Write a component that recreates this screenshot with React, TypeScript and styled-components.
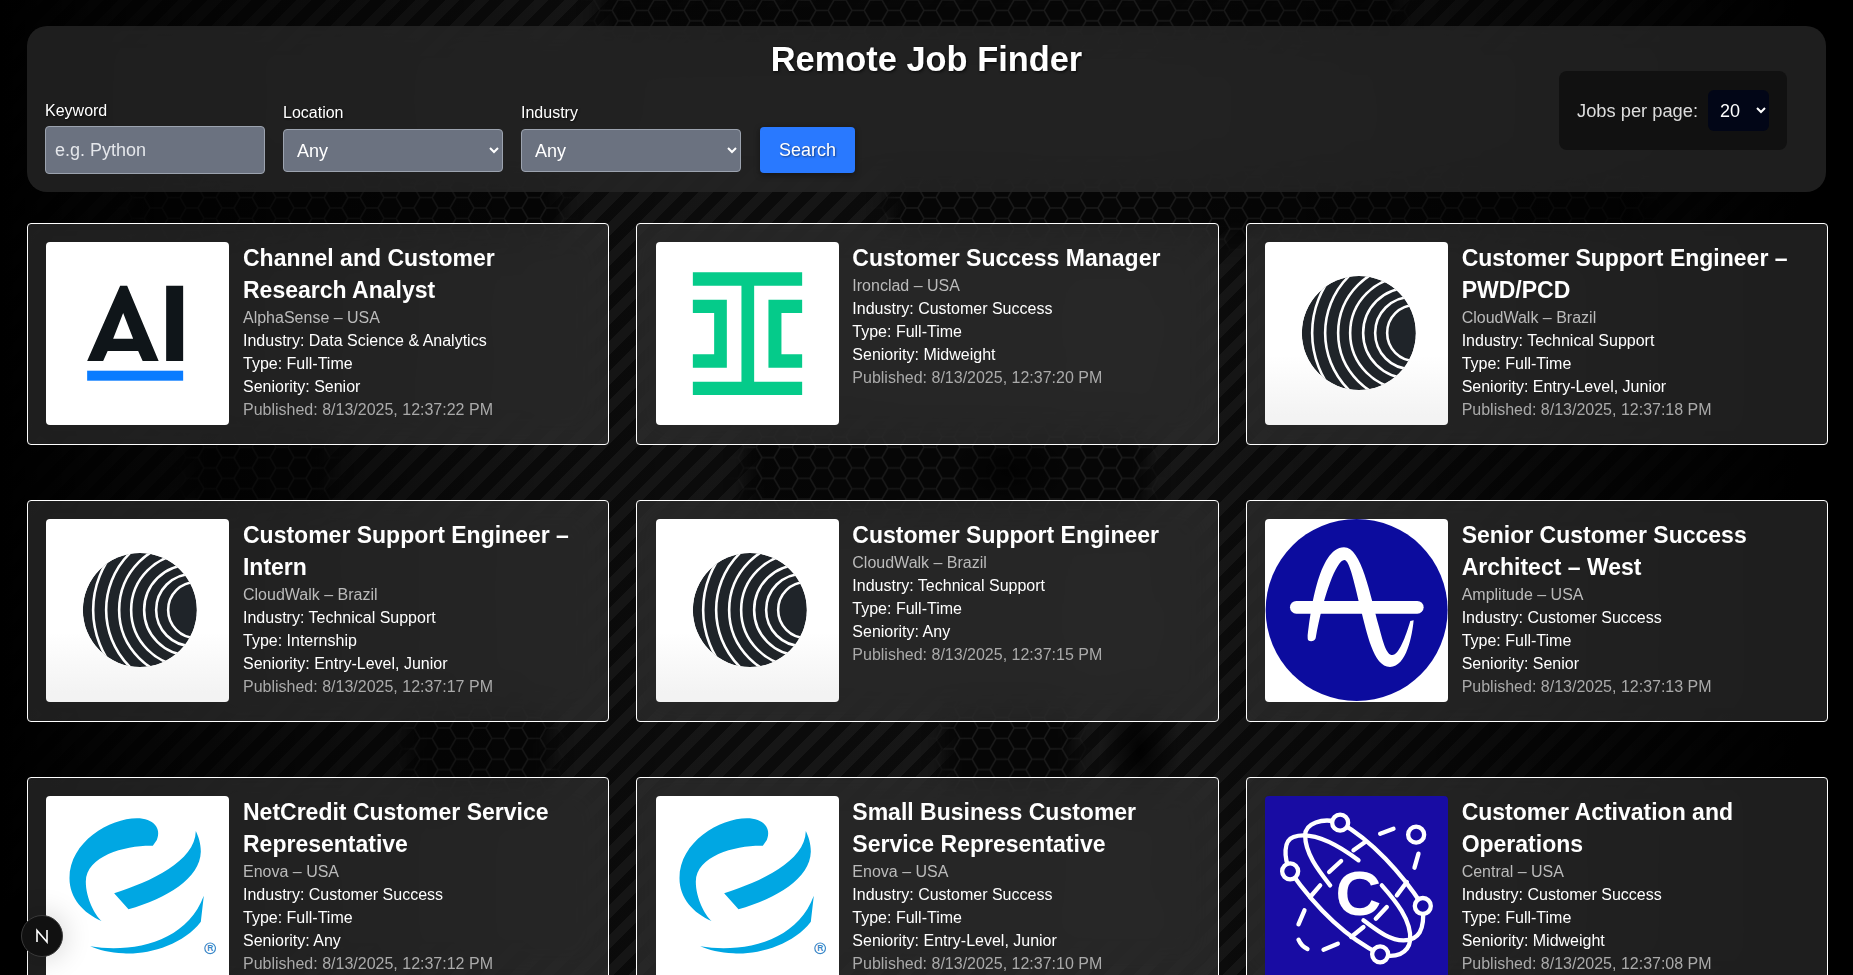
import React from "react";
import styled, { createGlobalStyle } from "styled-components";

const GlobalStyle = createGlobalStyle`
  html {
    background: #000;
  }
  body {
    margin: 0;
    padding: 0;
    color: #fff;
    font-family: "Liberation Sans", Arial, sans-serif;
  }
`;

const Backdrop = styled.div`
  position: fixed;
  inset: 0;
  z-index: -1;
  background:
    repeating-linear-gradient(135deg, #181818 0 10px, #0c0c0c 10px 21px);
  svg {
    position: absolute;
    inset: 0;
    width: 100%;
    height: 100%;
  }
  &::after {
    content: "";
    position: absolute;
    inset: 0;
    background:
      radial-gradient(40px 70px at 1140px 750px, rgba(0, 0, 0, 0.9), rgba(0, 0, 0, 0)),
      radial-gradient(60px 40px at 1010px 470px, rgba(0, 0, 0, 0.7), rgba(0, 0, 0, 0)),
      linear-gradient(90deg, #000 0, rgba(0, 0, 0, 0.8) 120px, rgba(0, 0, 0, 0.15) 560px, rgba(0, 0, 0, 0) 1150px, rgba(0, 0, 0, 0.8) 1650px, #000 1800px);
  }
`;

const Page = styled.main`
  width: 1801px;
  padding: 26px 0 40px 27px;
`;

const Header = styled.header`
  display: grid;
  grid-template-columns: 1fr auto;
  width: 1799px;
  box-sizing: border-box;
  padding: 13px 39px 18px 18px;
  border-radius: 20px;
  background: rgba(40, 40, 40, 0.75);
  backdrop-filter: blur(20px);
`;

const Title = styled.h1`
  grid-column: 1 / 3;
  grid-row: 1;
  margin: 0 -21px 22px 0;
  font-size: 34.4px;
  line-height: 41px;
  font-weight: 700;
  text-align: center;
  text-shadow: 1px 1px 3px rgba(0, 0, 0, 0.8);
`;

const Filters = styled.form`
  grid-column: 1;
  grid-row: 2;
  display: flex;
  align-items: center;
  gap: 18px;
`;

const Field = styled.div<{ $tight?: boolean }>`
  display: flex;
  flex-direction: column;
  gap: ${(p) => (p.$tight ? "6px" : "7px")};
`;

const FieldLabel = styled.label`
  font-size: 16px;
  line-height: 18px;
  text-shadow: 1px 1px 2px rgba(0, 0, 0, 0.7);
`;

const TextInput = styled.input`
  box-sizing: border-box;
  width: 220px;
  height: 48px;
  padding: 0 9px;
  border: 1px solid #9ca3af;
  border-radius: 4px;
  background: #6b7280;
  color: #fff;
  font: 18px "Liberation Sans", Arial, sans-serif;
  &::placeholder {
    color: #e5e7eb;
  }
`;

const FilterSelect = styled.select`
  box-sizing: border-box;
  width: 220px;
  height: 43px;
  padding: 1px 9px 0;
  border: 1px solid #9ca3af;
  border-radius: 4px;
  background-color: #6b7280;
  color: #fff;
  font: 18px "Liberation Sans", Arial, sans-serif;
`;

const SearchButton = styled.button`
  align-self: flex-end;
  width: 95px;
  height: 46px;
  margin: 0 0 1px 1px;
  border: 0;
  border-radius: 4px;
  background: #2979ff;
  color: #fff;
  font: 18px "Liberation Sans", Arial, sans-serif;
  text-shadow: 1px 1px 2px rgba(0, 0, 0, 0.5);
  box-shadow: 0 2px 6px rgba(0, 0, 0, 0.4);
`;

const PerPage = styled.div`
  grid-column: 2;
  grid-row: 1 / 3;
  align-self: center;
  display: flex;
  align-items: center;
  gap: 10px;
  margin-top: 8px;
  padding: 19px 18px;
  border-radius: 8px;
  background: #111;
  color: #ddd;
  font-size: 18.3px;
`;

const PerPageSelect = styled.select`
  box-sizing: border-box;
  width: 61px;
  height: 41px;
  padding: 0 8px;
  border: 0;
  border-radius: 6px;
  background-color: #020617;
  color: #fff;
  font: 18px "Liberation Sans", Arial, sans-serif;
`;

const JobGrid = styled.section`
  display: grid;
  grid-template-columns: repeat(3, 1fr);
  column-gap: 27px;
  row-gap: 55px;
  margin-top: 31px;
`;

const Card = styled.article`
  display: flex;
  gap: 13.5px;
  padding: 18px 18px 19px 18.2px;
  border: 1px solid #fff;
  border-radius: 4px;
  background: rgba(60, 60, 60, 0.5);
  backdrop-filter: blur(20px);
`;

const LogoBox = styled.div<{ $fade?: boolean; $bg?: string }>`
  flex: 0 0 183.3px;
  width: 183.3px;
  height: 183px;
  border-radius: 4px;
  overflow: hidden;
  background: ${(p) =>
    p.$bg || (p.$fade ? "linear-gradient(#fff 62%, #f3f3f3 95%)" : "#fff")};
  svg {
    display: block;
    width: 100%;
    height: 100%;
  }
`;

const JobInfo = styled.div`
  min-width: 0;
  padding-right: 10px;
`;

const JobTitle = styled.h2`
  margin: 0;
  font-size: 23px;
  line-height: 32px;
  font-weight: 700;
`;

const Line = styled.p<{ $color?: string }>`
  margin: 0;
  font-size: 16px;
  line-height: 23px;
  color: ${(p) => p.$color || "#fff"};
`;

const DevBadge = styled.div`
  position: fixed;
  left: 21px;
  top: 915px;
  box-sizing: border-box;
  width: 42px;
  height: 42px;
  display: flex;
  align-items: center;
  justify-content: center;
  border-radius: 50%;
  border: 1px solid #3a3a3a;
  background: #111;
  box-shadow: 0 0 30px rgba(0, 0, 0, 0.2);
`;

const AlphaSenseLogo = () => (
  <svg viewBox="0 0 183 183">
    <path
      fill="#0f1519"
      fillRule="evenodd"
      d="M74 43.7H81L112.5 119H96.5L92 109H61.5L57 119H41ZM77 71L67 96.7H87ZM120 43.7H137V119H120Z"
    />
    <rect x="41" y="128.7" width="96" height="10" fill="#0a7cff" />
  </svg>
);

const IroncladLogo = () => (
  <svg viewBox="0 0 183 183" fill="#05cb8a">
    <path d="M36.7 30.3H146V43.7H98V139.7H146V153H36.7V139.7H85.3V43.7H36.7Z" />
    <path d="M36.7 57.7H70.7V125.7H36.7V112.3H58V71H36.7Z" />
    <path d="M146 57.7H112.3V125.7H146V112.3H125.3V71H146Z" />
  </svg>
);

const cloudArcs = [
  [139, 92],
  [140, 80],
  [141, 68],
  [141, 56],
  [143, 45],
  [146, 36],
  [150, 28],
];

// the stripes are cut by a clip, each logo on the page needs its own id
const CloudWalkLogo: React.FC<{ id: string }> = ({ id }) => (
  <svg viewBox="0 0 183 183">
    <defs>
      <clipPath id={id}>
        <circle cx="93.7" cy="91" r="57" />
      </clipPath>
    </defs>
    <g clipPath={`url(#${id})`}>
      <circle cx="93.7" cy="91" r="57" fill="#1f2429" />
      {cloudArcs.map(([cx, r]) => (
        <path
          key={r}
          d={`M${cx} ${91 - r}A${r} ${r} 0 0 0 ${cx} ${91 + r}`}
          fill="none"
          stroke="#fff"
          strokeWidth="2.6"
        />
      ))}
    </g>
  </svg>
);

const AmplitudeLogo = () => (
  <svg viewBox="30 12 550 549">
    <circle cx="305" cy="285" r="273" fill="#0c0c9e" />
    <rect x="105" y="258" width="401" height="38" rx="19" fill="#fff" />
    <path
      fill="#fff"
      d="M158 368C165 300 190 97 267 97C320 97 345 240 372 335C385 385 395 420 412 420C432 420 452 365 466 318L476 316C472 360 455 456 405 456C355 456 335 350 318 285C300 215 285 135 268 135C245 135 205 240 182 370C178 382 156 382 158 368Z"
    />
  </svg>
);

const EnovaLogo = () => (
  <svg viewBox="138 33 549 549" fill="#00a7e3">
    <path d="M458 182C380 180 258 210 257 290C257 340 285 390 304 408C250 385 208 340 208 280C208 170 330 100 410 100C460 100 485 130 470 165Z" />
    <path d="M342 325L385 373C500 340 600 280 602 200C602 175 595 155 587 138C585 230 450 290 342 325Z" />
    <path d="M270 484C400 505 560 470 611 332L602 410C550 480 440 510 370 505C330 503 295 495 270 484Z" />
    <circle cx="630" cy="490" r="16" fill="none" stroke="#3a87c8" strokeWidth="3.5" />
    <text x="630" y="499" textAnchor="middle" fontSize="25" fontWeight="700" fill="#3a87c8" fontFamily="Liberation Sans, sans-serif">
      R
    </text>
  </svg>
);

const centralDashes = [
  "M375 130L415 115",
  "M490 190L478 232",
  "M455 275L425 315",
  "M395 350L362 385",
  "M325 410L288 440",
  "M330 155L295 180",
  "M258 212L222 245",
  "M195 285L165 320",
  "M148 360L130 402",
  "M130 448C136 462 144 470 157 476",
  "M205 478L248 460",
];

const CentralLogo = () => (
  <svg viewBox="30 17 549 549">
    <g fill="none" stroke="#fff" strokeWidth="13" strokeLinecap="round">
      <path d="M255 97C350 150 440 250 503 347" />
      <path d="M105 243C180 350 270 440 375 492" />
      <path d="M225 285C190 240 150 190 150 135C150 100 200 80 255 97" />
      <path d="M105 243C85 200 85 150 115 140C175 120 250 165 310 210" />
      <path d="M375 492C420 505 460 490 465 450C470 390 420 330 380 285" />
      <path d="M503 347C510 420 490 450 445 450C400 450 360 415 325 390" />
      {centralDashes.map((d) => (
        <path key={d} d={d} />
      ))}
      <circle cx="255" cy="97" r="24" fill="#180ca3" />
      <circle cx="105" cy="243" r="24" fill="#180ca3" />
      <circle cx="503" cy="347" r="24" fill="#180ca3" />
      <circle cx="375" cy="492" r="24" fill="#180ca3" />
      <circle cx="483" cy="133" r="24" />
    </g>
    <text x="310" y="373" textAnchor="middle" fontSize="190" fontWeight="700" fill="#fff" fontFamily="Liberation Sans, sans-serif">
      C
    </text>
  </svg>
);

interface Job {
  title: string;
  company: string;
  industry: string;
  type: string;
  seniority: string;
  published: string;
  logo: React.ReactNode;
  fade?: boolean;
  bg?: string;
}

const jobs: Job[] = [
  { title: "Channel and Customer Research Analyst", company: "AlphaSense – USA", industry: "Data Science & Analytics", type: "Full-Time", seniority: "Senior", published: "8/13/2025, 12:37:22 PM", logo: <AlphaSenseLogo /> },
  { title: "Customer Success Manager", company: "Ironclad – USA", industry: "Customer Success", type: "Full-Time", seniority: "Midweight", published: "8/13/2025, 12:37:20 PM", logo: <IroncladLogo /> },
  { title: "Customer Support Engineer – PWD/PCD", company: "CloudWalk – Brazil", industry: "Technical Support", type: "Full-Time", seniority: "Entry-Level, Junior", published: "8/13/2025, 12:37:18 PM", logo: <CloudWalkLogo id="cw-1" />, fade: true },
  { title: "Customer Support Engineer – Intern", company: "CloudWalk – Brazil", industry: "Technical Support", type: "Internship", seniority: "Entry-Level, Junior", published: "8/13/2025, 12:37:17 PM", logo: <CloudWalkLogo id="cw-2" />, fade: true },
  { title: "Customer Support Engineer", company: "CloudWalk – Brazil", industry: "Technical Support", type: "Full-Time", seniority: "Any", published: "8/13/2025, 12:37:15 PM", logo: <CloudWalkLogo id="cw-3" />, fade: true },
  { title: "Senior Customer Success Architect – West", company: "Amplitude – USA", industry: "Customer Success", type: "Full-Time", seniority: "Senior", published: "8/13/2025, 12:37:13 PM", logo: <AmplitudeLogo /> },
  { title: "NetCredit Customer Service Representative", company: "Enova – USA", industry: "Customer Success", type: "Full-Time", seniority: "Any", published: "8/13/2025, 12:37:12 PM", logo: <EnovaLogo /> },
  { title: "Small Business Customer Service Representative", company: "Enova – USA", industry: "Customer Success", type: "Full-Time", seniority: "Entry-Level, Junior", published: "8/13/2025, 12:37:10 PM", logo: <EnovaLogo /> },
  { title: "Customer Activation and Operations", company: "Central – USA", industry: "Customer Success", type: "Full-Time", seniority: "Midweight", published: "8/13/2025, 12:37:08 PM", logo: <CentralLogo />, bg: "#180ca3" },
];

const hexPatches = [
  [130, 175, 430, 65],
  [890, 175, 760, 65],
  [190, 430, 140, 85],
  [747, 430, 400, 85],
  [410, 705, 140, 90],
  [945, 705, 130, 90],
  [600, -10, 800, 50],
];

const App: React.FC = () => (
  <>
    <GlobalStyle />
    <Backdrop>
      <svg>
        <defs>
          <pattern id="hex" width="36" height="20.8" patternUnits="userSpaceOnUse">
            <rect width="36" height="20.8" fill="#060606" />
            <path
              d="M0 10.4L6 0H18L24 10.4L18 20.8H6ZM24 10.4H36"
              fill="none"
              stroke="#1b1b1b"
              strokeWidth="1.5"
            />
          </pattern>
          <filter id="soft-edge">
            <feGaussianBlur stdDeviation="10" />
          </filter>
          <mask id="hex-patches" maskUnits="userSpaceOnUse" x="0" y="0" width="1853" height="975">
            <g fill="#fff" filter="url(#soft-edge)">
              {hexPatches.map(([x, y, w, h]) => (
                <rect key={`${x}-${y}`} x={x} y={y} width={w} height={h} />
              ))}
            </g>
          </mask>
        </defs>
        <rect width="1853" height="975" fill="url(#hex)" mask="url(#hex-patches)" />
      </svg>
    </Backdrop>
    <Page>
      <Header>
        <Title>Remote Job Finder</Title>
        <Filters>
          <Field $tight>
            <FieldLabel>Keyword</FieldLabel>
            <TextInput placeholder="e.g. Python" />
          </Field>
          <Field>
            <FieldLabel>Location</FieldLabel>
            <FilterSelect>
              <option>Any</option>
            </FilterSelect>
          </Field>
          <Field>
            <FieldLabel>Industry</FieldLabel>
            <FilterSelect>
              <option>Any</option>
            </FilterSelect>
          </Field>
          <SearchButton type="button">Search</SearchButton>
        </Filters>
        <PerPage>
          Jobs per page:
          <PerPageSelect>
            <option>20</option>
          </PerPageSelect>
        </PerPage>
      </Header>
      <JobGrid>
        {jobs.map((job) => (
          <Card key={job.title}>
            <LogoBox $fade={job.fade} $bg={job.bg}>
              {job.logo}
            </LogoBox>
            <JobInfo>
              <JobTitle>{job.title}</JobTitle>
              <Line $color="#bbb">{job.company}</Line>
              <Line>Industry: {job.industry}</Line>
              <Line>Type: {job.type}</Line>
              <Line>Seniority: {job.seniority}</Line>
              <Line $color="#aaa">Published: {job.published}</Line>
            </JobInfo>
          </Card>
        ))}
      </JobGrid>
    </Page>
    <DevBadge>
      <svg width="16" height="16" viewBox="0 0 16 16" fill="none" stroke="#fff" strokeWidth="1.6">
        <path d="M3 14V2.5L13 14V2" />
      </svg>
    </DevBadge>
  </>
);

export default App;
